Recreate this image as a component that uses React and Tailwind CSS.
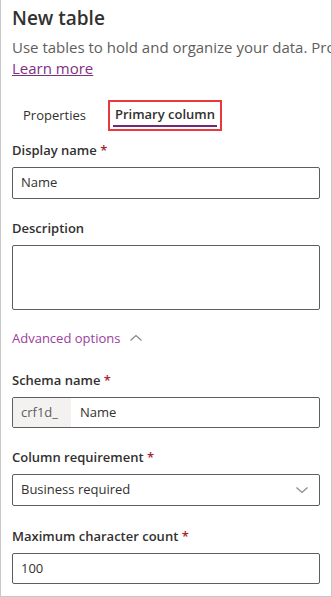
import React from "react";

const font = { fontFamily: '"Segoe UI", "Open Sans", "Liberation Sans", sans-serif' };

function Label({ children, required }) {
  return (
    <div className="text-[13px] font-semibold leading-[20px] text-[#323130]">
      {children}
      {required && <span className="text-[#a4262c]"> *</span>}
    </div>
  );
}

export default function App() {
  return (
    <div
      className="w-[332px] h-[597px] overflow-hidden bg-white border-l border-r border-b border-[#c8c8c8] box-border"
      style={font}
    >
      <div className="pl-[11px] pr-[11px]">
        <div className="pt-[4px] text-[19px] font-semibold leading-[28px] text-[#323130]">New table</div>
        <div className="mt-[5px] text-[15px] leading-[20px] text-[#605e5c] whitespace-nowrap">
          Use tables to hold and organize your data. Properties
        </div>
        <a className="block mt-[1px] w-fit text-[15px] leading-[20px] text-[#7e2f82] underline">Learn more</a>

        <div className="mt-[22px] flex items-end h-[31px]">
          <div className="ml-[11px] pb-[6px] text-[13px] leading-[20px] text-[#323130]">Properties</div>
          <div className="ml-[22px] h-[31px] border-2 border-[#e8393f] px-[3px] flex flex-col justify-end">
            <div className="px-[2px] text-[13px] font-semibold leading-[20px] text-[#323130]">Primary column</div>
            <div className="h-[2px] bg-[#742774] mt-[1px] mb-[2px]" />
          </div>
        </div>

        <div className="mt-[9px]">
          <Label required>Display name</Label>
          <div className="mt-[7px] h-[32px] w-[308px] border border-[#605e5c] rounded-[2px] px-[8px] flex items-center text-[13px] text-[#323130]">
            Name
          </div>
        </div>

        <div className="mt-[19px]">
          <Label>Description</Label>
          <div className="mt-[7px] h-[65px] w-[308px] border border-[#605e5c] rounded-[2px]" />
        </div>

        <div className="mt-[18px] flex items-center gap-[9px] text-[13px] leading-[20px] text-[#9b3d9e]">
          <span>Advanced options</span>
          <svg width="14" height="14" viewBox="0 0 14 14" fill="none">
            <path d="M1.5 9.5 L7 4.5 L12.5 9.5" stroke="#8a8886" strokeWidth="1.2" />
          </svg>
        </div>

        <div className="mt-[22px]">
          <Label required>Schema name</Label>
          <div className="mt-[7px] h-[31px] w-[308px] border border-[#605e5c] rounded-[2px] flex items-stretch text-[13px] overflow-hidden">
            <div className="bg-[#f3f2f1] text-[#605e5c] px-[8px] flex items-center w-[58px]">crf1d_</div>
            <div className="pl-[9px] flex items-center text-[#323130]">Name</div>
          </div>
        </div>

        <div className="mt-[19px]">
          <Label required>Column requirement</Label>
          <div className="mt-[7px] h-[32px] w-[308px] border border-[#605e5c] rounded-[2px] px-[8px] flex items-center justify-between text-[13px] text-[#323130]">
            <span>Business required</span>
            <svg width="14" height="14" viewBox="0 0 14 14" fill="none" className="mr-[2px]">
              <path d="M1.5 4.5 L7 9.5 L12.5 4.5" stroke="#8a8886" strokeWidth="1.2" />
            </svg>
          </div>
        </div>

        <div className="mt-[20px]">
          <Label required>Maximum character count</Label>
          <div className="mt-[7px] h-[31px] w-[308px] border border-[#605e5c] rounded-[2px] px-[8px] flex items-center text-[13px] text-[#323130]">
            100
          </div>
        </div>
      </div>
    </div>
  );
}
